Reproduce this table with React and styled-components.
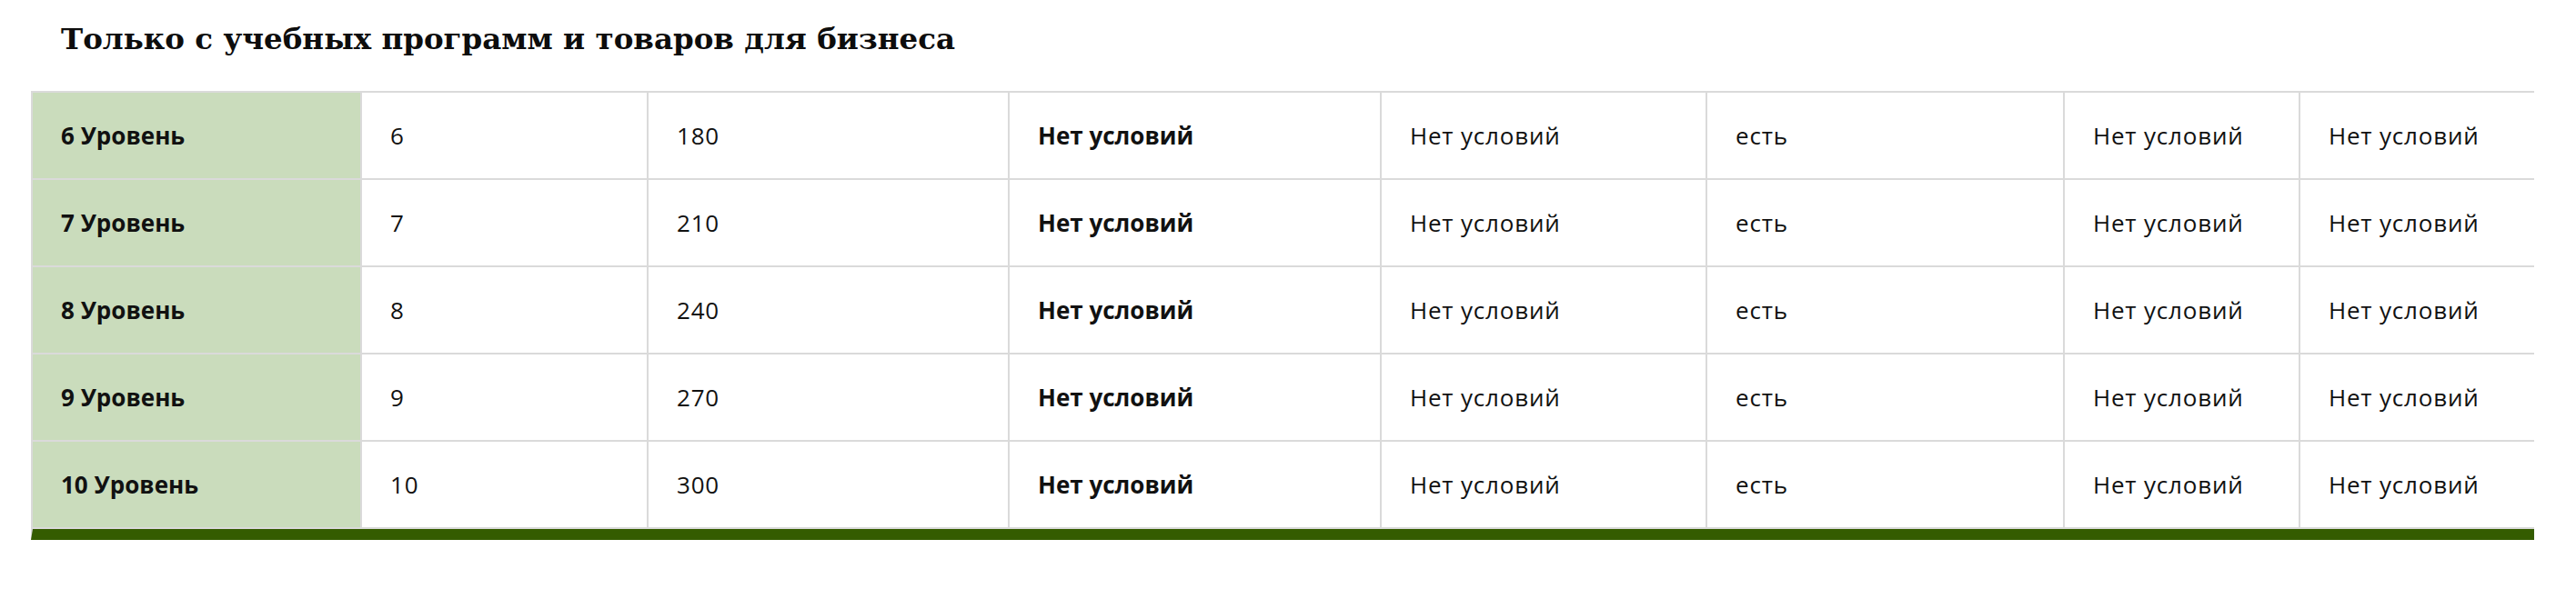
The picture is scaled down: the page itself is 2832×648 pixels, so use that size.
import React from 'react';
import styled, { createGlobalStyle } from 'styled-components';

const GlobalStyle = createGlobalStyle`
  body {
    margin: 0;
    background: #fff;
    color: #111;
  }
`;

const rows = [6, 7, 8, 9, 10];

function App() {
  return (
    <Page>
      <GlobalStyle />
      <Title>Только с учебных программ и товаров для бизнеса</Title>
      <Table>
        {rows.map((n) => (
          <React.Fragment key={n}>
            <Cell head bold>{n} Уровень</Cell>
            <Cell>{n}</Cell>
            <Cell>{n * 30}</Cell>
            <Cell bold>Нет условий</Cell>
            <Cell>Нет условий</Cell>
            <Cell>есть</Cell>
            <Cell>Нет условий</Cell>
            <Cell last>Нет условий</Cell>
          </React.Fragment>
        ))}
      </Table>
    </Page>
  );
}

export default App;

const Page = styled.div`
  padding: 0 0 40px 34px;
  width: 2752px;
`;

const Title = styled.h2`
  margin: 0;
  padding: 21px 0 0 33px;
  height: 100px;
  box-sizing: border-box;
  font-family: "DejaVu Serif", "Liberation Serif", serif;
  font-weight: 700;
  font-size: 32.5px;
  line-height: 44px;
  color: #0d0d0d;
`;

const Table = styled.div`
  display: grid;
  grid-template-columns: 362px 315px 397px 409px 358px 393px 259px 257px;
  grid-auto-rows: 96px;
  border-top: 2px solid #dadada;
  border-left: 2px solid #dadada;
  border-bottom: 12px solid #345c00;
`;

const Cell = styled.div`
  display: flex;
  align-items: center;
  padding-left: 31px;
  box-sizing: border-box;
  border-bottom: 2px solid #dadada;
  border-right: ${(p) => (p.last ? 'none' : '2px solid #dadada')};
  background: ${(p) => (p.head ? '#cadcbc' : '#fff')};
  font-family: "Open Sans", "Noto Sans", sans-serif;
  font-size: 26px;
  font-weight: ${(p) => (p.bold ? 700 : 400)};
  letter-spacing: ${(p) => (p.bold ? '0' : '0.8px')};
  color: #111;
  white-space: nowrap;
`;
